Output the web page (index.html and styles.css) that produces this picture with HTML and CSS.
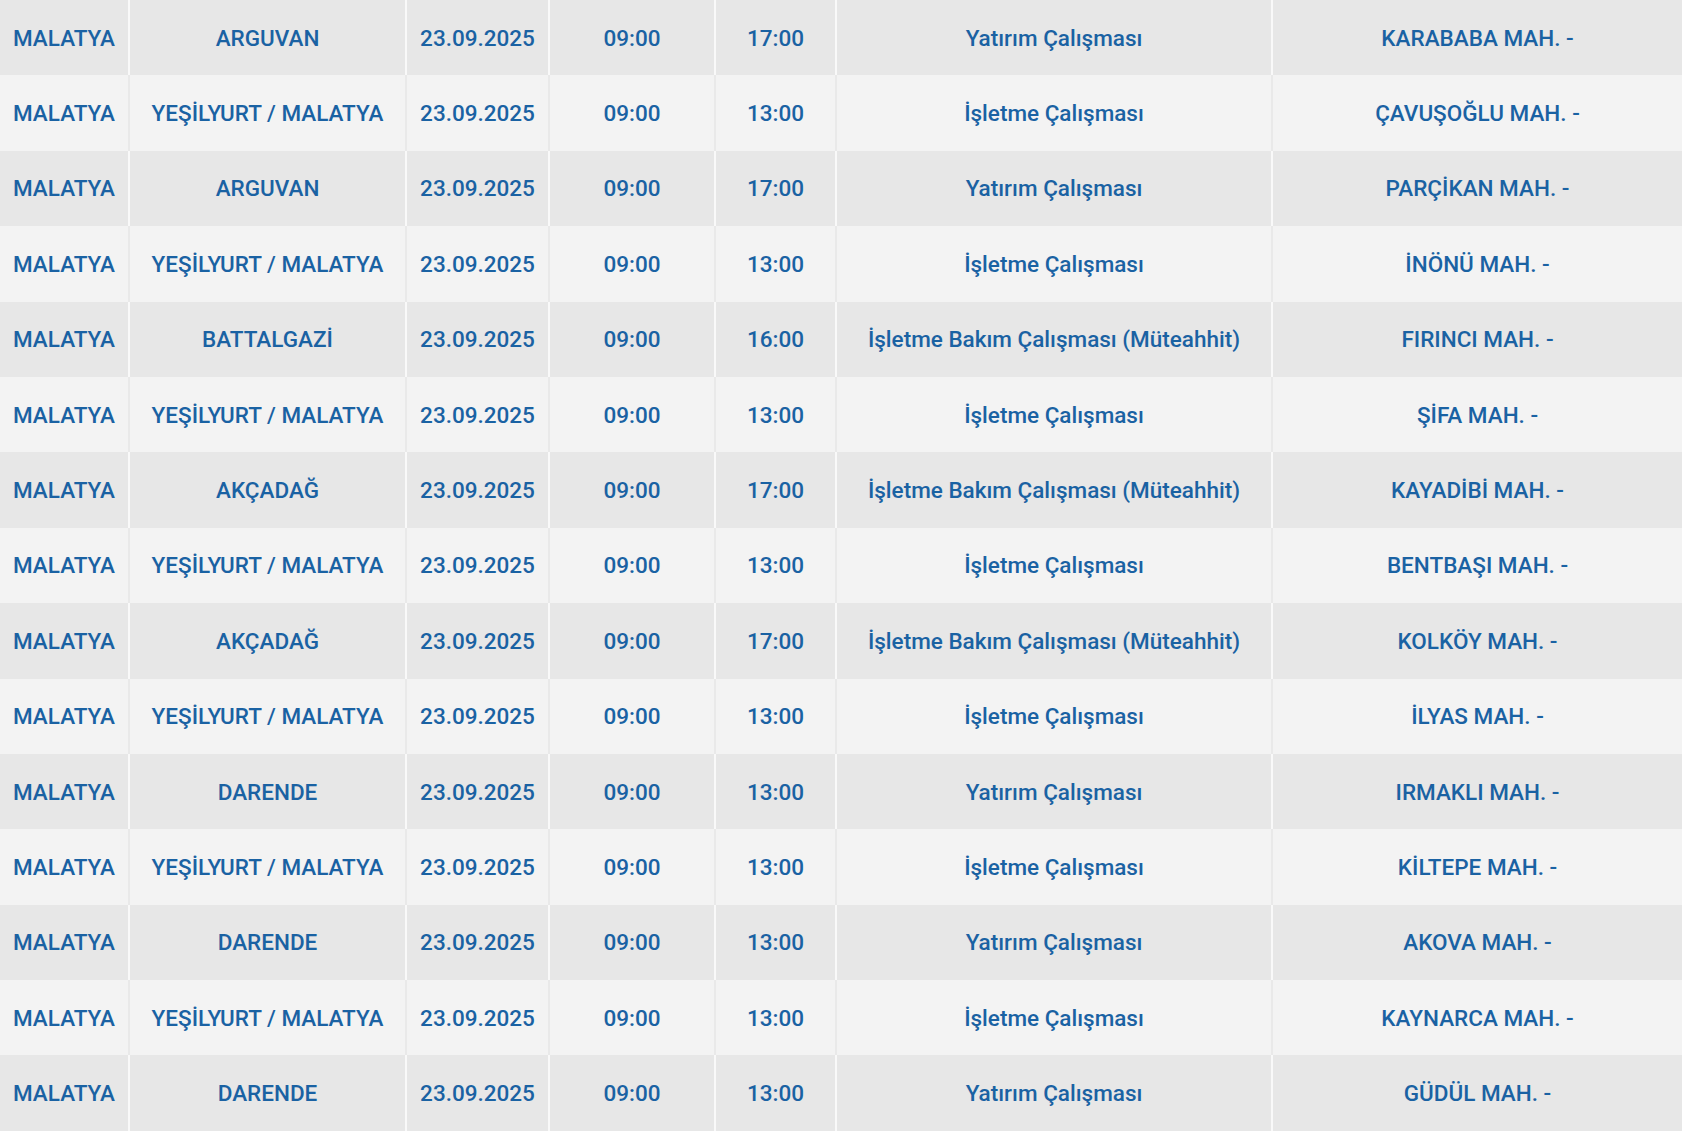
FILE: index.html
```html
<!DOCTYPE html>
<html lang="tr">
<head>
<meta charset="utf-8">
<title>Planlı Kesintiler</title>
<link rel="stylesheet" href="styles.css">
</head>
<body>
<table class="outages">
<colgroup>
<col class="c-il"><col class="c-ilce"><col class="c-date"><col class="c-start"><col class="c-end"><col class="c-type"><col class="c-area">
</colgroup>
<tbody>
<tr><td>MALATYA</td><td>ARGUVAN</td><td>23.09.2025</td><td>09:00</td><td>17:00</td><td>Yatırım Çalışması</td><td>KARABABA MAH. -</td></tr>
<tr><td>MALATYA</td><td>YEŞİLYURT / MALATYA</td><td>23.09.2025</td><td>09:00</td><td>13:00</td><td>İşletme Çalışması</td><td>ÇAVUŞOĞLU MAH. -</td></tr>
<tr><td>MALATYA</td><td>ARGUVAN</td><td>23.09.2025</td><td>09:00</td><td>17:00</td><td>Yatırım Çalışması</td><td>PARÇİKAN MAH. -</td></tr>
<tr><td>MALATYA</td><td>YEŞİLYURT / MALATYA</td><td>23.09.2025</td><td>09:00</td><td>13:00</td><td>İşletme Çalışması</td><td>İNÖNÜ MAH. -</td></tr>
<tr><td>MALATYA</td><td>BATTALGAZİ</td><td>23.09.2025</td><td>09:00</td><td>16:00</td><td>İşletme Bakım Çalışması (Müteahhit)</td><td>FIRINCI MAH. -</td></tr>
<tr><td>MALATYA</td><td>YEŞİLYURT / MALATYA</td><td>23.09.2025</td><td>09:00</td><td>13:00</td><td>İşletme Çalışması</td><td>ŞİFA MAH. -</td></tr>
<tr><td>MALATYA</td><td>AKÇADAĞ</td><td>23.09.2025</td><td>09:00</td><td>17:00</td><td>İşletme Bakım Çalışması (Müteahhit)</td><td>KAYADİBİ MAH. -</td></tr>
<tr><td>MALATYA</td><td>YEŞİLYURT / MALATYA</td><td>23.09.2025</td><td>09:00</td><td>13:00</td><td>İşletme Çalışması</td><td>BENTBAŞI MAH. -</td></tr>
<tr><td>MALATYA</td><td>AKÇADAĞ</td><td>23.09.2025</td><td>09:00</td><td>17:00</td><td>İşletme Bakım Çalışması (Müteahhit)</td><td>KOLKÖY MAH. -</td></tr>
<tr><td>MALATYA</td><td>YEŞİLYURT / MALATYA</td><td>23.09.2025</td><td>09:00</td><td>13:00</td><td>İşletme Çalışması</td><td>İLYAS MAH. -</td></tr>
<tr><td>MALATYA</td><td>DARENDE</td><td>23.09.2025</td><td>09:00</td><td>13:00</td><td>Yatırım Çalışması</td><td>IRMAKLI MAH. -</td></tr>
<tr><td>MALATYA</td><td>YEŞİLYURT / MALATYA</td><td>23.09.2025</td><td>09:00</td><td>13:00</td><td>İşletme Çalışması</td><td>KİLTEPE MAH. -</td></tr>
<tr><td>MALATYA</td><td>DARENDE</td><td>23.09.2025</td><td>09:00</td><td>13:00</td><td>Yatırım Çalışması</td><td>AKOVA MAH. -</td></tr>
<tr><td>MALATYA</td><td>YEŞİLYURT / MALATYA</td><td>23.09.2025</td><td>09:00</td><td>13:00</td><td>İşletme Çalışması</td><td>KAYNARCA MAH. -</td></tr>
<tr><td>MALATYA</td><td>DARENDE</td><td>23.09.2025</td><td>09:00</td><td>13:00</td><td>Yatırım Çalışması</td><td>GÜDÜL MAH. -</td></tr>
</tbody>
</table>
</body>
</html>
```
FILE: styles.css
```css
html, body {
  margin: 0;
  padding: 0;
  background: #f2f2f2;
}
body {
  font-family: Roboto, "Noto Sans", "Liberation Sans", sans-serif;
  overflow: hidden;
}
.outages {
  width: 1682px;
  table-layout: fixed;
  border-collapse: collapse;
}
.c-il { width: 129px; }
.c-ilce { width: 277px; }
.c-date { width: 143px; }
.c-start { width: 166px; }
.c-end { width: 121px; }
.c-type { width: 436px; }
.c-area { width: 410px; }
.outages td {
  height: 75.4px;
  padding: 0;
  box-sizing: border-box;
  text-align: center;
  vertical-align: middle;
  color: #1a62a3;
  font-size: 22.5px;
  font-weight: 500;
  white-space: nowrap;
  border-left: 2px solid #f9f9f9;
}
.outages td:first-child {
  border-left: none;
}
.outages tr:nth-child(odd) td {
  background: #e7e7e7;
}
.outages tr:nth-child(even) td {
  background: #f3f3f3;
  border-left-color: #e9e9e9;
}
```
